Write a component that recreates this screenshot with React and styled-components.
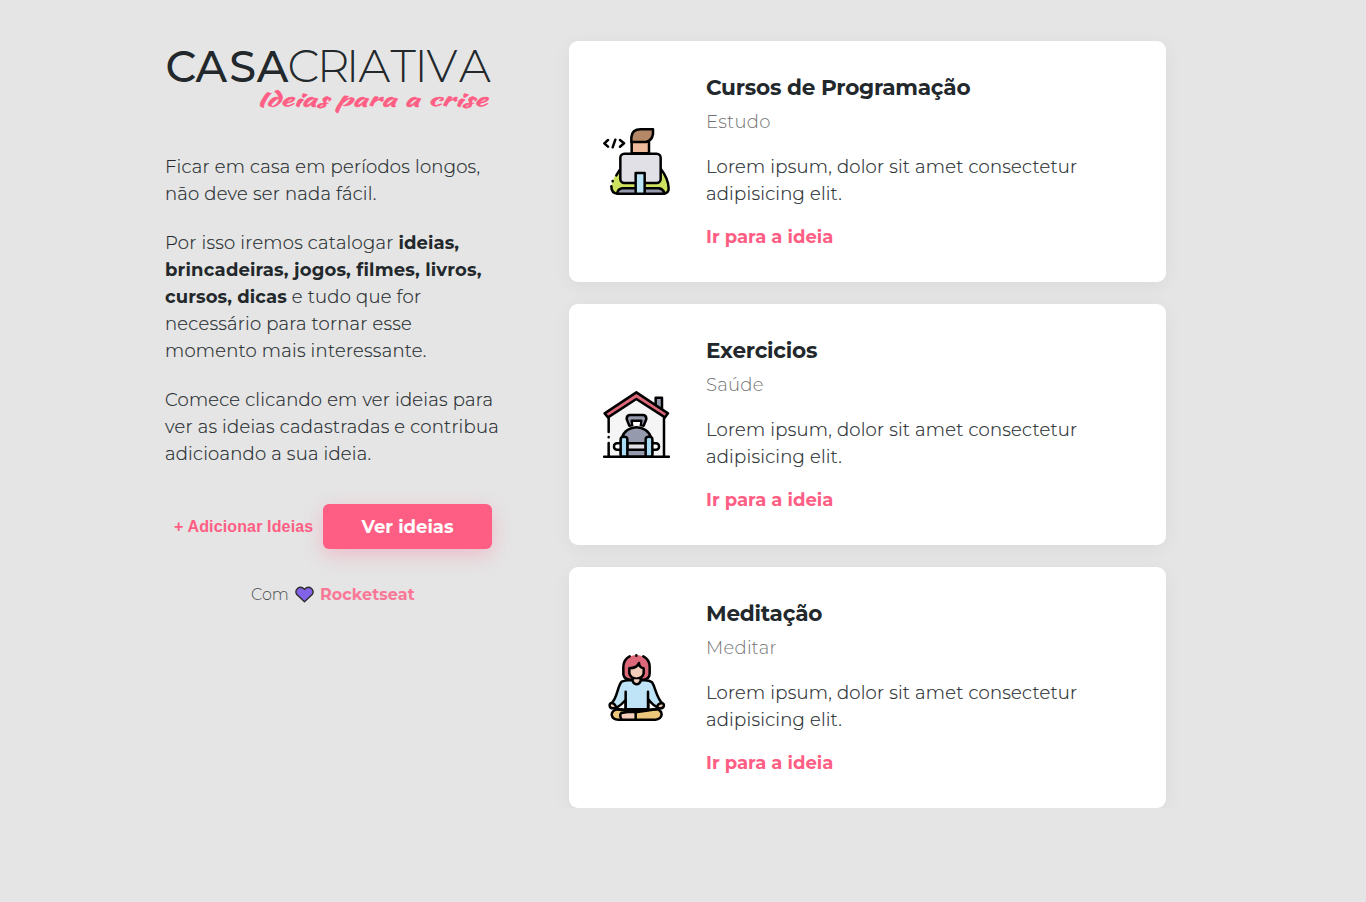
import React from "react";
import styled, { createGlobalStyle } from "styled-components";

const GlobalStyle = createGlobalStyle`
  * { box-sizing: border-box; margin: 0; padding: 0; }
  body {
    background: #e5e5e5;
    color: #22282b;
    font-family: Montserrat, Inter, sans-serif;
    font-size: 18px;
    font-weight: 300;
    line-height: 27px;
  }
  a { text-decoration: none; color: #ff5e84; }
`;

const Page = styled.div`
  display: flex;
  align-items: flex-start;
  width: 1036px;
  margin: 0 auto;
  padding-top: 41px;
`;

const Intro = styled.main`
  width: 335px;
  margin-right: 69px;
`;

const Logo = styled.svg`
  display: block;
  width: 335px;
  height: 80px;
  overflow: visible;
  margin-bottom: 33px;
`;

const Wordmark = styled.text`
  fill: #22282b;
  font-family: Montserrat, Inter, sans-serif;
  font-size: 45px;
  font-weight: ${(p) => p.$weight};
`;

const Tagline = styled.text`
  fill: #ff5e84;
  stroke: #ff5e84;
  stroke-width: 0.5px;
  font-family: "Kaushan Script", Yellowtail, Damion, Pacifico, Lobster, Lato, sans-serif;
  font-size: 18px;
  font-weight: 400;
`;

const Paragraph = styled.p`
  margin-bottom: 22px;
`;

const Line = styled.span`
  display: block;
  white-space: nowrap;
  letter-spacing: 0.24px;
  -webkit-text-stroke: 0.15px currentColor;
`;

const Strong = styled.strong`
  font-weight: 700;
  letter-spacing: ${(p) => p.$ls || 0.1}px;
  -webkit-text-stroke: 0;
`;

const Actions = styled.div`
  display: flex;
  align-items: center;
  margin-top: 36px;
  padding-left: 9px;
`;

const AddButton = styled.button`
  width: 149px;
  border: 0;
  background: none;
  text-align: left;
  white-space: nowrap;
  color: #ff5e84;
  font: 700 16px "Liberation Sans", Arial, sans-serif;
  letter-spacing: 0.14px;
`;

const ViewButton = styled.a`
  width: 169px;
  height: 45px;
  border-radius: 6px;
  background: #ff5e84;
  font-weight: 700;
  line-height: 47px;
  text-align: center;
  box-shadow: 0 6px 20px rgba(255, 94, 132, 0.3);
  && { color: #fff; }
`;

const Footer = styled.footer`
  display: flex;
  align-items: center;
  height: 27px;
  margin: 32px 0 0 86px;
  font-size: 16px;
  opacity: 0.8;
  white-space: nowrap;
  a { font-weight: 700; letter-spacing: 0.1px; }
`;

const Heart = styled.svg`
  width: 19px;
  height: 17px;
  margin: 0 6px;
`;

const Ideas = styled.section`
  display: grid;
  gap: 22px;
  width: 597px;
`;

const Card = styled.article`
  display: flex;
  align-items: center;
  height: 241px;
  padding: 33px 34px 31px;
  border-radius: 9px;
  background: #fff;
  box-shadow: 0 4px 20px rgba(0, 0, 0, 0.05);
`;

const Icon = styled.svg`
  flex: none;
  width: 67px;
  height: 67px;
  margin: 0 36px 2px 0;
`;

const Title = styled.h3`
  font-size: 21.6px;
  font-weight: 700;
  line-height: 27px;
  letter-spacing: -0.24px;
`;

const Category = styled.p`
  margin: 8px 0 18px;
  color: #737373;
  letter-spacing: 0.26px;
`;

const CardLink = styled.a`
  display: block;
  margin-top: 16px;
  font-weight: 700;
`;

const stroke = { stroke: "#000", strokeWidth: 7.5, strokeLinecap: "round", strokeLinejoin: "round" };

const CodingIcon = () => (
  <Icon viewBox="24 24 201 201" {...stroke} fill="none">
    <path d="M75 150C60 163 50 182 49 207Q51 221 67 222H206Q221 220 222 205C220 180 212 165 197 146Z" fill="#cfe260" stroke="none" />
    <path d="M73 151L64 166M53 183v1M49 199C49 214 56 221 68 221H206Q221 220 221 205C220 180 212 165 197 146" />
    <path d="M67 218Q70 206 83 205H192Q204 207 208 218V221H67Z" fill="#969aad" />
    <path d="M110 100V65H162V100Z" fill="#edba9b" />
    <path d="M109 66V52Q111 28 137 28H174V42Q171 62 153 66Z" fill="#b48766" />
    <rect x="76" y="101" width="121" height="88" rx="12" fill="#e0e0e6" />
    <path d="M122 221V159H149V221Z" fill="#bce6f8" />
    <path d="M39 60L28 70L39 80M61 59L53 82M75 60L87 70L75 80" />
  </Icon>
);

const HomeGymIcon = () => (
  <Icon viewBox="24 24 201 201" {...stroke} fill="none">
    <path d="M41 102L124 47L208 102V221H41Z" fill="#f5f5f6" stroke="none" />
    <path d="M182 66V44H201V80" fill="#969aad" />
    <path d="M41 104V147M41 162v1M41 180V221M207 104V221" />
    <path d="M124 28L219 91L210 103L124 48L39 103L29 91Z" fill="#dc6879" />
    <path d="M79 221C76 201 75 178 80 166C92 122 157 122 169 166C174 178 173 203 170 221Z" fill="#969aad" />
    <path d="M103 128L95 108Q95 97 104 96H145Q154 97 154 108L146 128L137 126L139 113H110L112 126Z" fill="#969aad" />
    <path d="M114 117H135L134 125H115Z" fill="#fff" stroke="none" />
    <rect x="57" y="181" width="135" height="19" rx="9" fill="#fff" />
    <rect x="97" y="181" width="55" height="19" fill="#e0e0e6" />
    <path d="M77 221V168Q77 161 87 161T97 168V221ZM152 221V168Q152 161 162 161T172 168V221Z" fill="#a9dcf4" />
    <path d="M27 221H222" />
  </Icon>
);

const MeditationIcon = () => (
  <Icon viewBox="24 24 201 201" {...stroke} fill="none">
    <path d="M103 32Q86 42 86 62V86Q88 101 105 101H145Q163 99 164 84V61Q163 40 146 32Q125 22 103 32Z" fill="#dc6879" stroke="none" />
    <path d="M104 31Q86 40 85 62V86Q89 101 105 101H145Q163 99 164 84V61Q163 40 145 31M124 28v1" />
    <path d="M103 67Q127 66 132 51Q133 65 146 67V82Q142 98 124 98Q107 97 103 82Z" fill="#f3ceba" />
    <path d="M80 107Q94 101 107 103H143Q161 101 171 109C181 120 183 158 205 175L190 185Q175 180 160 160V190H92V162Q80 176 62 187L48 173C68 157 66 122 80 107Z" fill="#bfe4f7" />
    <path d="M113 100V106Q117 115 125 115T137 105V100" fill="#f3ceba" />
    <path d="M92 137V190M159 137V190" />
    <path d="M55 187C42 188 40 170 51 171Q61 173 64 186ZM194 187C209 188 211 172 199 171Q188 173 186 184Z" fill="#f3ceba" />
    <path d="M65 190Q50 194 50 207Q53 221 70 221H181Q198 220 200 206Q199 191 183 190L122 199Z" fill="#ecc67a" />
    <path d="M81 221Q71 208 79 201Q96 197 122 197V221Z" fill="#f3ceba" />
    <path d="M64 189Q92 190 122 196L184 189" />
  </Icon>
);

const ideas = [
  { title: "Cursos de Programação", category: "Estudo", Art: CodingIcon },
  { title: "Exercicios", category: "Saúde", Art: HomeGymIcon },
  { title: "Meditação", category: "Meditar", Art: MeditationIcon },
];

export default function App() {
  return (
    <>
      <GlobalStyle />
      <Page>
        <Intro>
          <Logo viewBox="0 0 335 80">
            <g transform="scale(0.96 1)">
              <Wordmark $weight={500} y="40.500" x="0.6 31.800 67 95.500">CASA</Wordmark>
            </g>
            <Wordmark $weight={300} y="40.500" x="122.500 152 181 193.500 225.500 249.500 261.500 294">CRIATIVA</Wordmark>
            <Tagline x="91" y="65" textLength="231" lengthAdjust="spacingAndGlyphs">Ideias para a crise</Tagline>
          </Logo>
          <Paragraph>
            <Line>Ficar em casa em períodos longos,</Line>
            <Line>não deve ser nada fácil.</Line>
          </Paragraph>
          <Paragraph>
            <Line>Por isso iremos catalogar <Strong>ideias,</Strong></Line>
            <Line><Strong $ls={0.17}>brincadeiras, jogos, filmes, livros,</Strong></Line>
            <Line><Strong>cursos, dicas</Strong> e tudo que for</Line>
            <Line>necessário para tornar esse</Line>
            <Line>momento mais interessante.</Line>
          </Paragraph>
          <Paragraph>
            <Line>Comece clicando em ver ideias para</Line>
            <Line>ver as ideias cadastradas e contribua</Line>
            <Line>adicioando a sua ideia.</Line>
          </Paragraph>
          <Actions>
            <AddButton>+ Adicionar Ideias</AddButton>
            <ViewButton href="#">Ver ideias</ViewButton>
          </Actions>
          <Footer>
            <span>Com</span>
            <Heart viewBox="0 0 19 17">
              <path d="M9.5 15.8L1.8 8.6C-1 4 4.500-1.800 9.500 3.200C14.500-1.800 20 4 17.200 8.600Z" fill="#6a42e8" stroke="#000" strokeWidth="1.4" strokeLinejoin="round" />
            </Heart>
            <a href="#">Rocketseat</a>
          </Footer>
        </Intro>
        <Ideas>
          {ideas.map(({ title, category, Art }) => (
            <Card key={title}>
              <Art />
              <div>
                <Title>{title}</Title>
                <Category>{category}</Category>
                <Line>Lorem ipsum, dolor sit amet consectetur</Line>
                <Line>adipisicing elit.</Line>
                <CardLink href="#">Ir para a ideia</CardLink>
              </div>
            </Card>
          ))}
        </Ideas>
      </Page>
    </>
  );
}
